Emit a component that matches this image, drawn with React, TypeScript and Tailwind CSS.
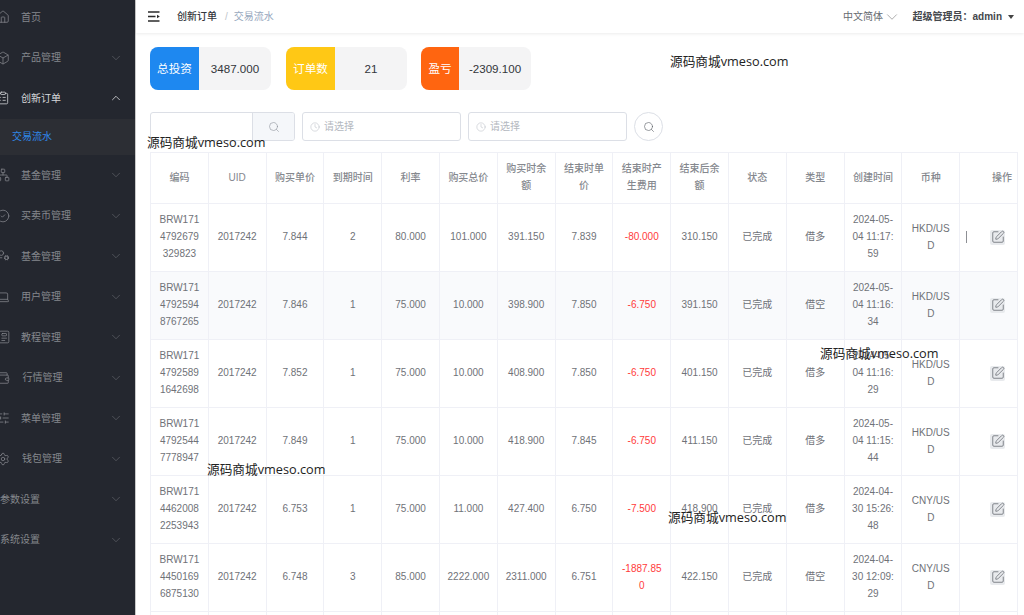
import {
  Box,
  ChevronDown,
  ChevronUp,
  CircleCheck,
  ClipboardList,
  Clock,
  House,
  Laptop,
  Network,
  Newspaper,
  Search,
  Settings,
  SlidersHorizontal,
  SquarePen,
  UserCog,
  Wallet,
} from 'lucide-react';
import type { ComponentType } from 'react';

type MenuItem = {
  label: string;
  icon?: ComponentType<{ size?: number; strokeWidth?: number; className?: string }>;
  slot: string;
  arrow?: boolean;
  open?: boolean;
};

const menu: MenuItem[] = [
  { label: '首页', icon: House, slot: 'w-[21px]' },
  { label: '产品管理', icon: Box, slot: 'w-[21px]', arrow: true },
  { label: '创新订单', icon: ClipboardList, slot: 'w-[21px]', arrow: true, open: true },
  { label: '基金管理', icon: Network, slot: 'w-[21px]', arrow: true },
  { label: '买卖币管理', icon: CircleCheck, slot: 'w-[21px]', arrow: true },
  { label: '基金管理', icon: UserCog, slot: 'w-[21px]', arrow: true },
  { label: '用户管理', icon: Laptop, slot: 'w-[21px]', arrow: true },
  { label: '教程管理', icon: Newspaper, slot: 'w-[21px]', arrow: true },
  { label: '行情管理', icon: Wallet, slot: 'w-[22.5px]', arrow: true },
  { label: '菜单管理', icon: SlidersHorizontal, slot: 'w-[21px]', arrow: true },
  { label: '钱包管理', icon: Settings, slot: 'w-[22px]', arrow: true },
  { label: '参数设置', slot: 'w-0', arrow: true },
  { label: '系统设置', slot: 'w-0', arrow: true },
];

const headers = [
  '编码', 'UID', '购买单价', '到期时间', '利率', '购买总价', '购买时余额', '结束时单价',
  '结束时产生费用', '结束后余额', '状态', '类型', '创建时间', '币种',
];

const rows = [
  ['BRW1714792679329823', '2017242', '7.844', '2', '80.000', '101.000', '391.150', '7.839', '-80.000', '310.150', '已完成', '借多', '2024-05-04 11:17:59', 'HKD/USD'],
  ['BRW17147925948767265', '2017242', '7.846', '1', '75.000', '10.000', '398.900', '7.850', '-6.750', '391.150', '已完成', '借空', '2024-05-04 11:16:34', 'HKD/USD'],
  ['BRW17147925891642698', '2017242', '7.852', '1', '75.000', '10.000', '408.900', '7.850', '-6.750', '401.150', '已完成', '借多', '2024-05-04 11:16:29', 'HKD/USD'],
  ['BRW17147925447778947', '2017242', '7.849', '1', '75.000', '10.000', '418.900', '7.845', '-6.750', '411.150', '已完成', '借多', '2024-05-04 11:15:44', 'HKD/USD'],
  ['BRW17144620082253943', '2017242', '6.753', '1', '75.000', '11.000', '427.400', '6.750', '-7.500', '418.900', '已完成', '借多', '2024-04-30 15:26:48', 'CNY/USD'],
  ['BRW17144501696875130', '2017242', '6.748', '3', '85.000', '2222.000', '2311.000', '6.751', '-1887.850', '422.150', '已完成', '借空', '2024-04-30 12:09:29', 'CNY/USD'],
];

function Sidebar() {
  return (
    <aside className="w-[136px] h-full shrink-0 overflow-hidden bg-[#24272f] border-r border-[#c9c9c9] text-[10px]">
      <div className="-mt-[3px]">
        {menu.map((item, i) => {
          const Icon = item.icon;
          return (
            <div key={i}>
              <div className={`h-[40.5px] flex items-center pr-[12px] ${item.open ? 'text-[#d8d9dc]' : 'text-[#85878d]'}`}>
                <span className={`${item.slot} shrink-0`}>
                  {Icon && <Icon size={14} strokeWidth={1.3} className="-ml-[4px]" />}
                </span>
                <span className="flex-1 whitespace-nowrap">{item.label}</span>
                {item.arrow && (item.open
                  ? <ChevronUp size={14} strokeWidth={1.4} />
                  : <ChevronDown size={14} strokeWidth={1} className="text-[#6d6f76]" />)}
              </div>
              {item.open && (
                <div className="h-[36.5px] flex items-center pl-[12px] bg-[#2c2e34] text-[#2f87e8]">交易流水</div>
              )}
            </div>
          );
        })}
      </div>
    </aside>
  );
}

function TopBar() {
  return (
    <header className="h-[33px] shrink-0 flex items-center pl-[12px] pr-[10px] text-[10px] shadow-[0_1px_3px_rgba(0,0,0,0.08)]">
      <svg width="12" height="11" viewBox="0 0 12 11" className="text-[#2b2b2b]">
        <path d="M0 1h11.5M0 5.5h7.5M0 10h11.5" stroke="currentColor" strokeWidth="1.5" fill="none" />
        <path d="M9 3.8l2.8 1.7L9 7.2z" fill="currentColor" />
      </svg>
      <span className="ml-[17px] font-medium text-[#33363b]">创新订单</span>
      <span className="ml-[8px] text-[#c0c4cc]">/</span>
      <span className="ml-[6px] text-[#97a8be]">交易流水</span>
      <span className="ml-auto text-[#666a70]">中文简体</span>
      <ChevronDown size={18} strokeWidth={0.8} className="text-[#777]" />
      <span className="ml-[11.5px] font-bold text-[#44474c]">超级管理员：admin</span>
      <span className="ml-[6px] border-x-[3px] border-t-[4px] border-x-transparent border-t-[#444]" />
    </header>
  );
}

function Stat({ label, value, labelClass, valueClass }: { label: string; value: string; labelClass: string; valueClass: string }) {
  return (
    <div className="h-[43px] flex rounded-[8px] overflow-hidden bg-[#f4f4f5] text-[11.6px]">
      <div className={`flex items-center justify-center text-white ${labelClass}`}>{label}</div>
      <div className={`flex items-center justify-center text-[#33363b] ${valueClass}`}>{value}</div>
    </div>
  );
}

function DateInput() {
  return (
    <div className="w-[159px] h-[29px] flex items-center pl-[7px] gap-[4px] rounded-[3px] border border-[#dcdfe6] text-[10px] text-[#b4b8c0]">
      <Clock size={10} strokeWidth={1.2} />
      <span className="-mt-px">请选择</span>
    </div>
  );
}

function Filters() {
  return (
    <div className="mt-[22px] h-[29px] flex gap-[7px]">
      <div className="w-[145px] flex rounded-[3px] border border-[#dcdfe6] overflow-hidden">
        <div className="flex-1" />
        <div className="w-[42px] flex items-center justify-center bg-[#f5f7fa] border-l border-[#dcdfe6] text-[#8f949c]">
          <Search size={12} strokeWidth={1.2} />
        </div>
      </div>
      <DateInput />
      <DateInput />
      <div className="w-[29px] flex items-center justify-center rounded-full border border-[#dcdfe6] text-[#555a61]">
        <Search size={12} strokeWidth={1.2} />
      </div>
    </div>
  );
}

function EditButton() {
  return (
    <span className="w-[15px] h-[15px] flex items-center justify-center rounded-[2px] bg-[#e8eaed] text-[#73777e]">
      <SquarePen size={14} strokeWidth={1.5} />
    </span>
  );
}

function DataTable() {
  return (
    <table className="mt-[11px] w-[868px] table-fixed border-collapse text-[10px] leading-[16.7px] text-[#6f7278] text-center">
      <thead>
        <tr className="h-[51px]">
          {headers.map((h) => (
            <th key={h} className="border border-[#eff0f6] px-[7.5px] font-medium text-[#85888e]">{h}</th>
          ))}
          <th className="border border-[#eff0f6] pr-[5px] text-right font-medium text-[#85888e]">操作</th>
        </tr>
      </thead>
      <tbody>
        {rows.map((row, r) => (
          <tr key={r} className={`h-[68px] ${r === 1 ? 'bg-[#f9fafc]' : ''}`}>
            {row.map((cell, c) => (
              <td
                key={c}
                className={`border border-[#eff0f6] px-[7.5px] break-all ${c === 8 ? 'text-[#ff3b3b]' : ''}`}
              >
                {cell}
              </td>
            ))}
            <td className="border border-[#eff0f6]">
              <div className="flex items-center justify-between pl-[6px] pr-[12px] -mt-px">
                <span className={`w-px h-[12px] ${r === 0 ? 'bg-[#8d8f94]' : ''}`} />
                <EditButton />
              </div>
            </td>
          </tr>
        ))}
        <tr className="h-[68px]">
          {Array(15).fill(0).map((_, i) => (
            <td key={i} className="border border-[#eff0f6]" />
          ))}
        </tr>
      </tbody>
    </table>
  );
}

function Watermark({ className }: { className: string }) {
  return (
    <div className={`absolute whitespace-nowrap text-[12.7px] leading-[16px] text-[#222] font-['Open_Sans','Noto_Sans_CJK_SC',sans-serif] ${className}`}>
      源码商城vmeso.com
    </div>
  );
}

export default function App() {
  return (
    <div className="relative w-[1024px] h-[615px] flex overflow-hidden bg-white font-['Liberation_Sans','Noto_Sans_CJK_SC',sans-serif]">
      <Sidebar />
      <main className="flex-1 min-w-0 flex flex-col">
        <TopBar />
        <div className="pl-[14px] pt-[14px]">
          <div className="flex gap-[15px]">
            <div className="w-[121px]">
              <Stat label="总投资" value="3487.000" labelClass="w-[49px] bg-[#1e88f0]" valueClass="w-[72px]" />
            </div>
            <div className="w-[121px]">
              <Stat label="订单数" value="21" labelClass="w-[49px] bg-[#ffc815]" valueClass="w-[72px]" />
            </div>
            <div className="w-[110px] -ml-px">
              <Stat label="盈亏" value="-2309.100" labelClass="w-[38px] bg-[#ff6510]" valueClass="w-[72px]" />
            </div>
          </div>
          <Filters />
          <DataTable />
        </div>
      </main>
      <Watermark className="left-[147px] top-[134px]" />
      <Watermark className="left-[670px] top-[53px]" />
      <Watermark className="left-[820px] top-[345px]" />
      <Watermark className="left-[207px] top-[461px]" />
      <Watermark className="left-[668px] top-[509px]" />
    </div>
  );
}
